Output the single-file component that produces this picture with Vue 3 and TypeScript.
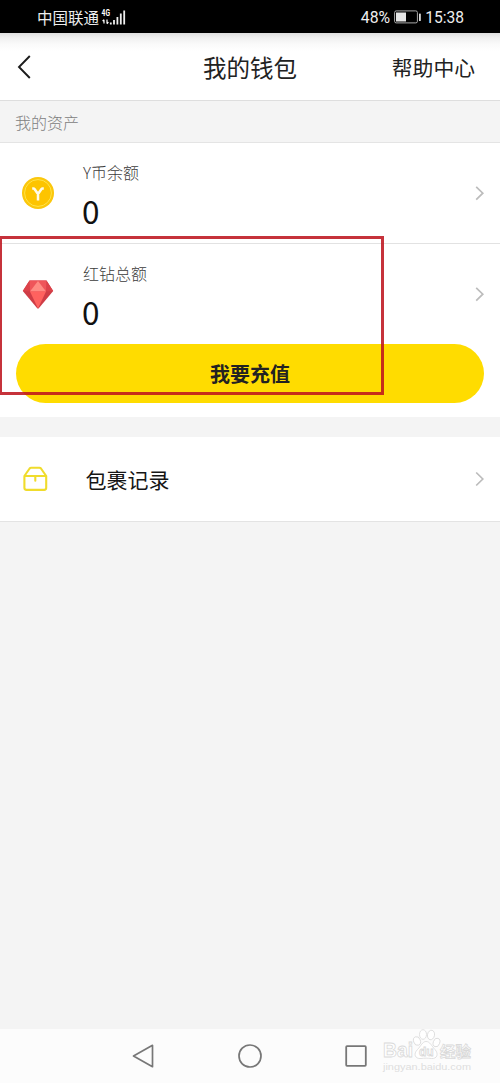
<script setup lang="ts">
interface Asset {
  label: string
  amount: number
  icon: 'coin' | 'gem'
}

const assets: Asset[] = [
  { label: 'Y币余额', amount: 0, icon: 'coin' },
  { label: '红钻总额', amount: 0, icon: 'gem' },
]
</script>

<template>
  <div class="phone">
    <div class="status">
      <span class="carrier">中国联通</span>
      <svg class="signal" width="26" height="17" viewBox="0 0 26 17">
        <text x="0.6" y="7.3" class="net" textLength="8.4" lengthAdjust="spacingAndGlyphs">4G</text>
        <path d="M3 14.6V10.8M1.6 12.2L3 10.6M6 10.6V14.4M7.4 13L6 14.8" stroke="#fff" stroke-width="1.2" fill="none" />
        <path d="M9.8 13.5V15.5M13 11V15.5M16.4 8V15.5M19.8 4.5V15.5M23.2 1.5V15.5" stroke="#eee" stroke-width="1.8" />
      </svg>
      <span class="percent">48%</span>
      <svg class="battery" width="28" height="14" viewBox="0 0 28 14">
        <rect x=".6" y=".9" width="22.8" height="12" rx="1.6" fill="none" stroke="#aaa" stroke-width="1" />
        <rect x="2" y="2.5" width="10" height="9" fill="#e6e6e6" />
        <rect x="25" y="3.5" width="1.8" height="7.5" rx=".6" fill="#ddd" />
      </svg>
      <span class="time">15:38</span>
    </div>

    <header class="header">
      <svg class="back" width="16" height="26" viewBox="0 0 16 26">
        <path d="M13.8 2L3 13L13.8 24" fill="none" stroke="#1c1c1c" stroke-width="1.9" />
      </svg>
      <h1>我的钱包</h1>
      <span class="help">帮助中心</span>
    </header>

    <div class="section-title">我的资产</div>

    <section class="assets">
      <div v-for="asset in assets" :key="asset.icon" class="asset">
        <svg v-if="asset.icon === 'coin'" class="asset-icon" width="34" height="34" viewBox="0 0 34 34">
          <circle cx="17" cy="17" r="16" fill="#fbc70c" />
          <circle cx="17" cy="17" r="13.4" fill="#fdc400" stroke="#ffe34a" stroke-width="1" />
          <path d="M11.2 12.4H12.4Q13.1 12.4 13.5 13.1L17 18L20.5 13.1Q20.9 12.4 21.6 12.4H22.8M17 17.4V24.4" fill="none" stroke="#fffbea" stroke-width="2.5" />
        </svg>
        <svg v-else class="asset-icon" width="34" height="34" viewBox="0 0 34 34">
          <path d="M8.5 3.6H25.5L32.2 13.9L17.8 31.2Q17 31.9 16.2 31.2L1.8 13.9Z" fill="#cf3d46" />
          <path d="M8.5 3.6L9 14.4L1.8 13.9ZM25.5 3.6L25 14.4L32.2 13.9Z" fill="#dc424a" />
          <path d="M8.5 3.6H25.5L25 14.4H9Z" fill="#ef555a" />
          <path d="M17 4.1L25 14.4H9Z" fill="#ff8b83" />
          <path d="M9 14.4H25L17 31.4Z" fill="#ff625f" />
        </svg>
        <div class="asset-text">
          <span class="label">{{ asset.label }}</span>
          <span class="amount">{{ asset.amount }}</span>
        </div>
        <svg class="arrow" width="10" height="16" viewBox="0 0 10 16">
          <path d="M1.2 1.8L7.8 8.2L1.2 14.6" fill="none" stroke="#bcbcbc" stroke-width="1.7" />
        </svg>
      </div>
      <button class="recharge">我要充值</button>
    </section>

    <section class="records">
      <svg class="box" width="26" height="26" viewBox="0 0 26 26">
        <path d="M2.4 10V21.8Q2.4 23.9 4.4 23.9H22.2Q24.2 23.9 24.2 21.8V10L19 2.5Q18.4 1.8 17.5 1.8H9.1Q8.2 1.8 7.6 2.5L2.4 10H24.2M13.3 10V14.8" fill="none" stroke="#f0dc2c" stroke-width="2.1" stroke-linejoin="round" stroke-linecap="round" />
      </svg>
      <span class="record-text">包裹记录</span>
      <svg class="arrow" width="10" height="16" viewBox="0 0 10 16">
        <path d="M1.2 1.5L7.8 8L1.2 14.5" fill="none" stroke="#bcbcbc" stroke-width="1.7" />
      </svg>
    </section>

    <nav class="nav">
      <svg width="24" height="26" viewBox="0 0 24 26">
        <path d="M21.5 2.3V23.7L2.5 13Z" fill="none" stroke="#777" stroke-width="1.7" stroke-linejoin="round" />
      </svg>
      <svg width="26" height="26" viewBox="0 0 26 26">
        <circle cx="13" cy="13" r="11" fill="none" stroke="#777" stroke-width="1.7" />
      </svg>
      <svg width="24" height="26" viewBox="0 0 24 26">
        <rect x="1.2" y="3.2" width="19.6" height="19.6" rx=".8" fill="none" stroke="#777" stroke-width="1.8" />
      </svg>
    </nav>

    <svg class="watermark" width="100" height="52" viewBox="0 0 100 52">
      <g fill="#fff" stroke="#d9d9d9" stroke-width=".8">
        <text x="3" y="34" class="brand" textLength="30" lengthAdjust="spacingAndGlyphs">Bai</text>
        <ellipse cx="37" cy="18" rx="3.4" ry="4.4" transform="rotate(-20 37 18)" />
        <ellipse cx="43" cy="11.5" rx="3.5" ry="4.8" />
        <ellipse cx="51" cy="12" rx="3.5" ry="4.8" transform="rotate(12 51 12)" />
        <ellipse cx="56.5" cy="19.5" rx="3.2" ry="4.4" transform="rotate(20 56.5 19.5)" />
        <path d="M46 18.5C50 18.5 51.5 23 55 26.5C59 31 57 36 51.5 35.5C48 35 44 35 41 35.5C35 36 33 31 37.5 26.5C41 23 42.5 18.5 46 18.5Z" />
        <text x="39" y="33" class="du">du</text>
        <text x="60" y="33.5" class="cn" textLength="31" lengthAdjust="spacingAndGlyphs">经验</text>
      </g>
      <text x="3" y="47" class="site" textLength="88" lengthAdjust="spacingAndGlyphs">jingyan.baidu.com</text>
    </svg>
    <div class="highlight"></div>
  </div>
</template>

<style>
body {
  margin: 0;
  background: #f4f4f4;
}
</style>

<style scoped>
.phone {
  position: relative;
  display: flex;
  flex-direction: column;
  width: 500px;
  height: 1083px;
  overflow: hidden;
  background: #f4f4f4;
  font-family: "Noto Sans CJK SC", sans-serif;
  color: #222;
}
svg {
  display: block;
  flex: none;
}
.status {
  display: flex;
  align-items: center;
  box-sizing: border-box;
  height: 33px;
  flex: none;
  padding: 1px 36px 0 37px;
  background: #000;
  color: #eee;
  font-family: Roboto, "Noto Sans CJK SC", sans-serif;
  font-size: 16px;
  line-height: 32px;
}
.carrier {
  width: 64px;
  font-family: "Noto Sans CJK SC", sans-serif;
  font-size: 15.5px;
  line-height: 30px;
  white-space: nowrap;
}
.net {
  font: bold 9px Roboto, sans-serif;
  fill: #fff;
}
.percent {
  margin-left: auto;
  padding-top: 1px;
  font-size: 15.8px;
}
.battery {
  margin: 0 3px 0 4px;
}
.time {
  padding-top: 1px;
  font-size: 15.6px;
}
.header {
  display: grid;
  grid-template-columns: 1fr auto 1fr;
  align-items: center;
  box-sizing: border-box;
  height: 68px;
  flex: none;
  padding: 0 25px 0 16px;
  border-bottom: 1px solid #dedede;
  background: linear-gradient(#dfdfdf 0, #f0f0f0 5px, #fafafa 11px, #fff 18px);
}
h1 {
  margin: 0 0 0 9px;
  font-size: 23.5px;
  font-weight: 400;
  line-height: 34px;
}
.help {
  justify-self: end;
  font-size: 20.8px;
  line-height: 32px;
}
.section-title {
  box-sizing: border-box;
  height: 42px;
  flex: none;
  padding-left: 15px;
  border-bottom: 1px solid #e4e4e4;
  color: #808080;
  font-size: 16px;
  font-weight: 300;
  line-height: 42px;
}
.assets {
  box-sizing: border-box;
  height: 274px;
  flex: none;
  background: #fff;
}
.asset {
  display: flex;
  align-items: center;
  box-sizing: border-box;
  height: 100px;
  padding: 0 15px 0 21px;
}
.asset:first-child {
  height: 101px;
  border-bottom: 1px solid #e2e2e2;
}
.asset-text {
  display: flex;
  flex-direction: column;
  margin-left: 27px;
  padding-top: 6px;
}
.label {
  color: #3c3c3c;
  font-size: 16px;
  font-weight: 300;
  line-height: 24px;
  padding-left: 1px;
}
.amount {
  color: #111;
  font-size: 31.5px;
  line-height: 44px;
  margin-top: 4px;
}
.arrow {
  margin-left: auto;
}
.recharge {
  display: block;
  width: 468px;
  height: 59px;
  margin: 0 auto;
  padding: 0;
  border: 0;
  border-radius: 30px;
  background: #ffdc00;
  color: #222;
  font: bold 20px/59px "Noto Sans CJK SC", sans-serif;
}
.records {
  display: flex;
  align-items: center;
  box-sizing: border-box;
  height: 85px;
  flex: none;
  margin-top: 20px;
  padding: 0 15px 0 22px;
  border-bottom: 1px solid #e3e3e3;
  background: #fff;
}
.record-text {
  margin-left: 37.5px;
  color: #151515;
  font-size: 21px;
  line-height: 32px;
}
.nav {
  display: flex;
  justify-content: center;
  align-items: center;
  gap: 82px;
  height: 54px;
  flex: none;
  margin-top: auto;
  background: #fcfcfc;
}
.watermark {
  position: absolute;
  left: 380px;
  top: 1023px;
}
.brand,
.du {
  font-family: "Liberation Sans", sans-serif;
  font-weight: bold;
}
.brand {
  font-size: 20px;
}
.du {
  font-size: 12px;
}
.cn {
  font: bold 15px "Noto Sans CJK SC", sans-serif;
}
.site {
  font: 9.5px "Liberation Sans", sans-serif;
  fill: #dedede;
}
.highlight {
  position: absolute;
  box-sizing: border-box;
  left: -1px;
  top: 236px;
  width: 385px;
  height: 159px;
  border: 3px solid rgba(190, 20, 30, 0.87);
}
</style>
